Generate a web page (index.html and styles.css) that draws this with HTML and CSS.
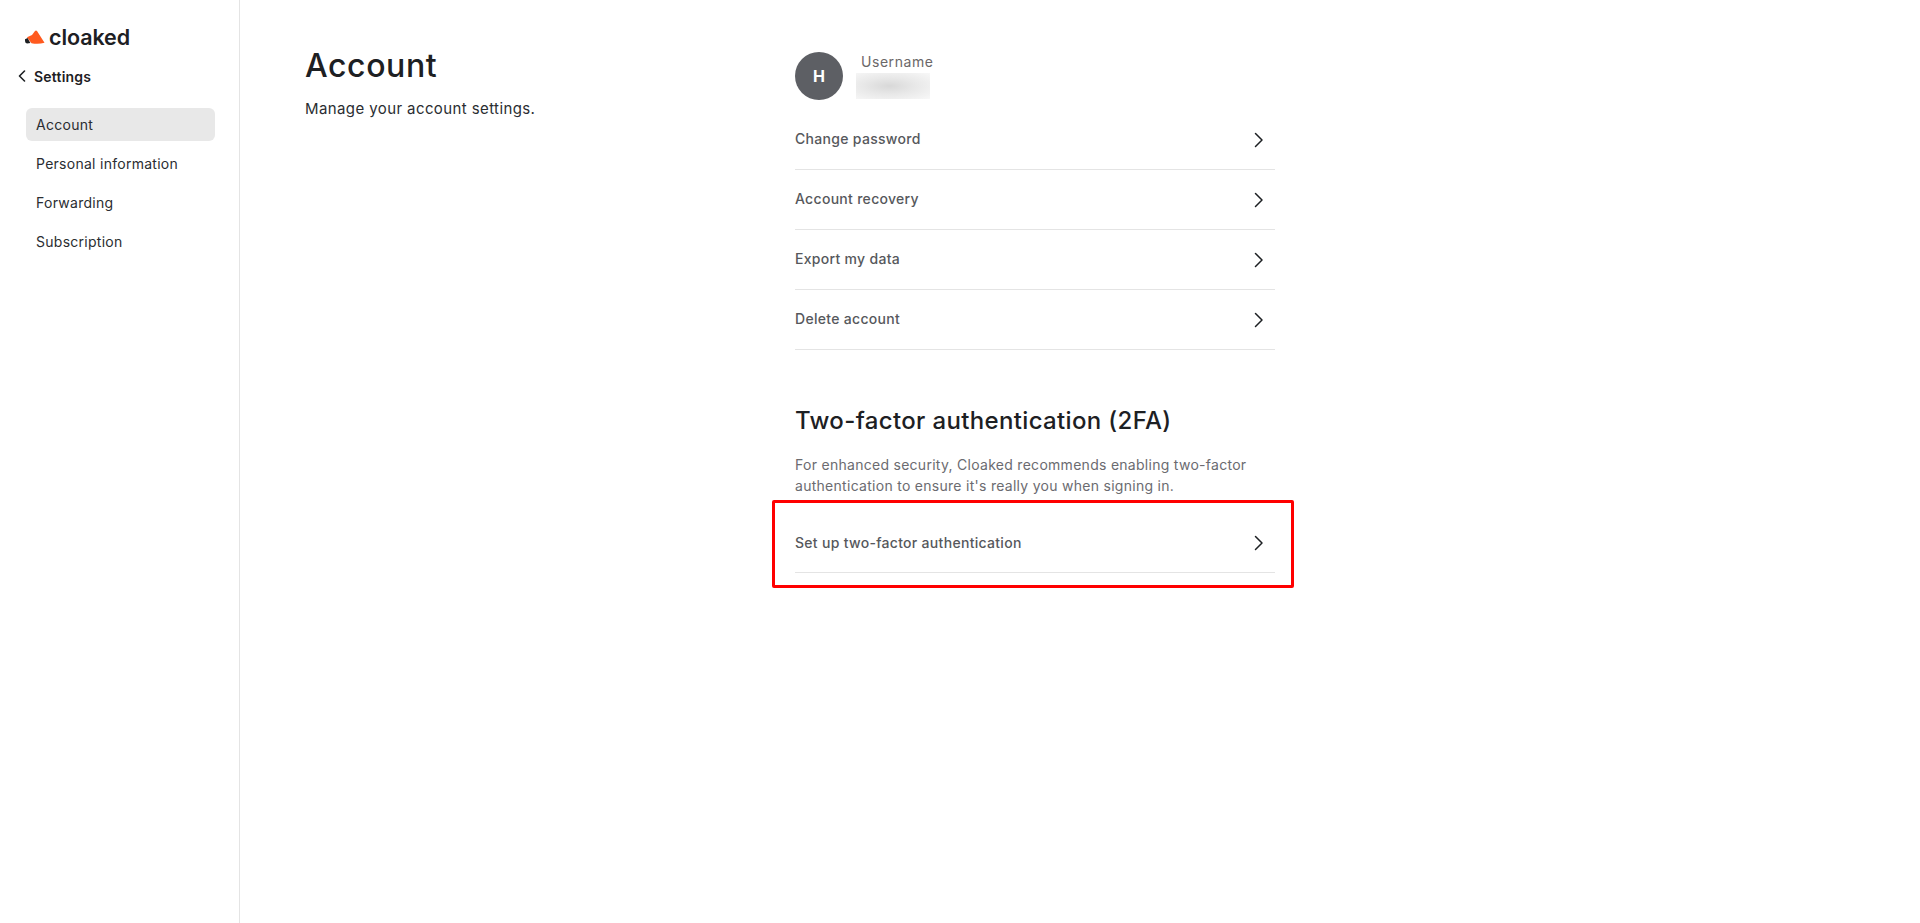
FILE: index.html
```html
<!DOCTYPE html>
<html lang="en">
<head>
<meta charset="utf-8">
<title>Account</title>
<link rel="stylesheet" href="styles.css">
</head>
<body>
<div class="app">
  <aside class="sidebar">
    <div class="logo">
      <svg class="logo-mark" width="21" height="15" viewBox="0 0 21 15"><path d="M3 7.2 L8 5 L11 1 Q12 0 13 1 L20.5 12.8 Q14 14.6 7.5 13.2 Z" fill="#ff5a1f"/><path d="M1 9.2 L3.6 8 L6.4 12.9 L3 13.4 Q1 13.2 1 11 Z" fill="#1d2023"/></svg>
      <span class="logo-text">cloaked</span>
    </div>
    <div class="back">
      <svg width="8" height="12" viewBox="0 0 8 12"><path d="M6.5 1 L1.5 6 L6.5 11" fill="none" stroke="#1d2023" stroke-width="1.6" stroke-linecap="round" stroke-linejoin="round"/></svg>
      <span>Settings</span>
    </div>
    <nav class="nav">
      <a class="nav-item active">Account</a>
      <a class="nav-item">Personal information</a>
      <a class="nav-item">Forwarding</a>
      <a class="nav-item">Subscription</a>
    </nav>
  </aside>
  <main class="main">
    <section class="intro">
      <h1>Account</h1>
      <p>Manage your account settings.</p>
    </section>
    <section class="panel">
      <div class="user">
        <div class="avatar">H</div>
        <div class="user-text">
          <div class="user-label">Username</div>
          <div class="user-blur"></div>
        </div>
      </div>
      <div class="rows">
        <a class="row"><span>Change password</span><svg width="10" height="16" viewBox="0 0 10 16"><path d="M1.5 1.5 L8 8 L1.5 14.5" fill="none" stroke="#1d2023" stroke-width="1.5" stroke-linecap="round" stroke-linejoin="round"/></svg></a>
        <a class="row"><span>Account recovery</span><svg width="10" height="16" viewBox="0 0 10 16"><path d="M1.5 1.5 L8 8 L1.5 14.5" fill="none" stroke="#1d2023" stroke-width="1.5" stroke-linecap="round" stroke-linejoin="round"/></svg></a>
        <a class="row"><span>Export my data</span><svg width="10" height="16" viewBox="0 0 10 16"><path d="M1.5 1.5 L8 8 L1.5 14.5" fill="none" stroke="#1d2023" stroke-width="1.5" stroke-linecap="round" stroke-linejoin="round"/></svg></a>
        <a class="row"><span>Delete account</span><svg width="10" height="16" viewBox="0 0 10 16"><path d="M1.5 1.5 L8 8 L1.5 14.5" fill="none" stroke="#1d2023" stroke-width="1.5" stroke-linecap="round" stroke-linejoin="round"/></svg></a>
      </div>
      <h2>Two-factor authentication (2FA)</h2>
      <p class="desc">For enhanced security, Cloaked recommends enabling two-factor authentication to ensure it's really you when signing in.</p>
      <div class="highlight">
        <a class="row row-2fa"><span>Set up two-factor authentication</span><svg width="10" height="16" viewBox="0 0 10 16"><path d="M1.5 1.5 L8 8 L1.5 14.5" fill="none" stroke="#1d2023" stroke-width="1.5" stroke-linecap="round" stroke-linejoin="round"/></svg></a>
      </div>
    </section>
  </main>
</div>
</body>
</html>
```
FILE: styles.css
```css
* { box-sizing: border-box; }
html, body { margin: 0; height: 100%; background: #fff; }
body { font-family: "Inter", "Noto Sans", sans-serif; color: #1d2023; overflow: hidden; }
h1, h2, p { margin: 0; font-weight: 400; }

.app { display: flex; height: 923px; }

.sidebar { width: 240px; flex: none; border-right: 1px solid #e4e4e4; padding: 24px 0 0 0; }
.logo { display: flex; align-items: center; gap: 4px; padding-left: 24px; height: 26px; }
.logo-mark { flex: none; }
.logo-text { font-size: 21.5px; font-weight: 600; letter-spacing: -0.1px; line-height: 26px; }
.back { display: flex; align-items: center; gap: 8px; padding-left: 18px; margin-top: 16px; height: 20px; font-size: 14px; font-weight: 600; letter-spacing: 0.2px; }
.nav { display: flex; flex-direction: column; margin: 22px 24px 0 26px; gap: 6px; }
.nav-item { display: flex; align-items: center; height: 33px; padding: 0 0 1px 10px; font-size: 14px; letter-spacing: 0.27px; border-radius: 6px; color: #2a2d31; }
.nav-item.active { background: #e8e8e8; }

.main { flex: 1; display: flex; padding: 0 0 0 65px; }
.intro { width: 490px; flex: none; padding-top: 46px; }
.intro h1 { font-size: 32px; line-height: 40px; font-weight: 500; letter-spacing: 0.6px; color: #1d2023; }
.intro p { margin-top: 12px; font-size: 15px; line-height: 22px; letter-spacing: 0.4px; color: #2a2d31; }

.panel { width: 480px; flex: none; padding-top: 52px; }
.user { display: flex; gap: 18px; height: 48px; }
.avatar { width: 48px; height: 48px; border-radius: 50%; background: #5d5f64; color: #fff; font-size: 16px; font-weight: 700; display: flex; align-items: center; justify-content: center; }
.user-text { position: relative; }
.user-label { font-size: 14px; line-height: 20px; margin-top: 0; letter-spacing: 0.55px; color: #6b6768; }
.user-blur { width: 74px; height: 26px; margin: 1px 0 0 -5px; background: radial-gradient(ellipse at 45% 50%, #d8d8d8 0%, #e8e8e8 45%, #f8f8f8 100%); }

.rows { margin-top: 10px; }
.row { display: flex; align-items: center; justify-content: space-between; height: 60px; padding: 0 11px 2px 0; border-bottom: 1px solid #e4e4e4; font-size: 14px; font-weight: 500; color: #56585c; letter-spacing: 0.3px; }
.row svg { margin-top: 2px; flex: none; }

.panel h2 { margin-top: 55px; font-size: 24px; line-height: 32px; font-weight: 500; letter-spacing: 0.35px; color: #1d2023; }
.desc { margin-top: 17px; font-size: 14px; line-height: 21px; color: #6b6b70; letter-spacing: 0.28px; }

.highlight { margin: 4px -19px 0 -23px; height: 88px; border: 3px solid #f00; border-radius: 2px; padding: 0 16px 0 20px; }
.row-2fa { height: 70px; padding-top: 9px; padding-bottom: 0; }
.row-2fa svg { margin-top: 1px; }
```
